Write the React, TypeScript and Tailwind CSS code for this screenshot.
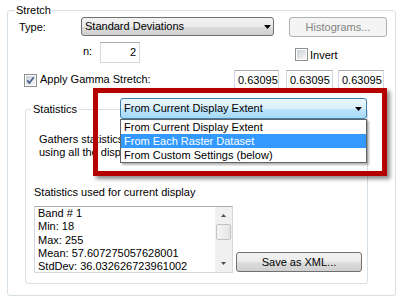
import clsx from "clsx";

function Arrow({ className }: { className?: string }) {
  return (
    <svg width="7" height="4" viewBox="0 0 7 4" className={className}>
      <polygon points="0,0 7,0 3.5,4" fill="#000" />
    </svg>
  );
}

function Check({ checked, className }: { checked?: boolean; className?: string }) {
  return (
    <svg width="13" height="13" viewBox="0 0 13 13" className={clsx("shrink-0", className)}>
      <defs>
        <linearGradient id={checked ? "cbOn" : "cbOff"} x1="0" y1="0" x2="1" y2="1">
          <stop offset="0" stopColor="#cbcfd5" />
          <stop offset="1" stopColor="#f7f7f7" />
        </linearGradient>
      </defs>
      <rect x="0.5" y="0.5" width="12" height="12" fill="#fff" stroke="#8f8f8f" />
      <rect x="2" y="2" width="9" height="9" fill={`url(#${checked ? "cbOn" : "cbOff"})`} />
      {checked && (
        <path d="M3.2 6.4 L5.4 9 L9.8 3.2" fill="none" stroke="#4a5c93" strokeWidth="1.7" />
      )}
    </svg>
  );
}

function Combo({
  text,
  hot,
  className,
}: {
  text: string;
  hot?: boolean;
  className?: string;
}) {
  return (
    <div
      className={clsx(
        "flex items-center justify-between rounded-[3px] border pl-[3px]",
        hot
          ? "border-[#3c7fb1] bg-[linear-gradient(#eaf6fd,#d9f0fc_50%,#bee6fd_50%,#a7d9f5)]"
          : "border-[#707070] bg-[linear-gradient(#f2f2f2,#ebebeb_50%,#dddddd_50%,#cfcfcf)]",
        className
      )}
    >
      <span className="whitespace-nowrap">{text}</span>
      <Arrow />
    </div>
  );
}

function TextBox({ value, className }: { value: string; className?: string }) {
  return (
    <div
      className={clsx(
        "h-[20px] overflow-hidden whitespace-nowrap border border-[#d5d8dd] border-t-[#abadb3] bg-white leading-[18px]",
        className
      )}
    >
      {value}
    </div>
  );
}

function ScrollBar() {
  return (
    <div className="flex w-[17px] shrink-0 flex-col items-center bg-[#f0f0f0]">
      <div className="flex h-[17px] w-full items-center justify-center">
        <svg width="5" height="3" viewBox="0 0 5 3">
          <polygon points="2.5,0 5,3 0,3" fill="#4d4d4d" />
        </svg>
      </div>
      <div className="h-[16px] w-[15px] rounded-[2px] border border-[#c2c2c2] bg-[linear-gradient(90deg,#f4f4f4,#e6e6e6)]" />
      <div className="flex-1" />
      <div className="flex h-[17px] w-full items-center justify-center">
        <svg width="5" height="3" viewBox="0 0 5 3">
          <polygon points="0,0 5,0 2.5,3" fill="#4d4d4d" />
        </svg>
      </div>
    </div>
  );
}

export default function App() {
  return (
    <div className="relative h-[307px] w-[400px] overflow-hidden bg-white font-['Liberation_Sans',Arial,sans-serif] text-[11px] leading-[13px] text-black">
      <fieldset className="ml-[7px] mt-[3px] h-[293px] w-[389px] rounded-[3px] border border-[#d5dfe5]">
        <legend className="ml-[7px] px-[1px] leading-[14px]">Stretch</legend>

        {/* Type */}
        <div className="flex h-[20px] items-start">
          <span className="ml-[11px] mt-[4px] w-[62px]">Type:</span>
          <Combo text="Standard Deviations" className="h-[19px] w-[193px] pr-[2px]" />
          <button
            disabled
            className="ml-[15px] h-[20px] w-[98px] rounded-[3px] border border-[#adb2b5] bg-[#f4f4f4] text-[#838383]"
          >
            Histograms...
          </button>
        </div>

        {/* n / Invert */}
        <div className="mt-[5px] flex h-[21px] items-start">
          <span className="ml-[75px] mt-[3px] w-[17px]">n:</span>
          <TextBox value="2" className="h-[21px] w-[40px] pr-[3px] text-right leading-[19px]" />
          <Check className="ml-[155px] mt-[6px]" />
          <span className="ml-[2px] mt-[7px]">Invert</span>
        </div>

        {/* Gamma */}
        <div className="mt-[7px] flex h-[20px] items-start">
          <Check checked className="ml-[16px] mt-[4px]" />
          <span className="ml-[3px] mt-[3px] w-[194px]">Apply Gamma Stretch:</span>
          <TextBox value="0.63095" className="w-[45px] pl-[3px]" />
          <TextBox value="0.63095" className="ml-[7px] w-[47px] pl-[3px]" />
          <TextBox value="0.63095" className="ml-[5px] w-[46px] pl-[3px]" />
        </div>

        {/* Statistics */}
        <fieldset className="ml-[17px] mt-[12px] h-[182px] w-[342px] rounded-[3px] border border-[#d5dfe5]">
          <legend className="ml-[5px] px-[2px] leading-[14px]">Statistics</legend>

          <div className="relative z-10 -mt-[18px] ml-[94px] h-[21px] w-[247px]">
            <Combo hot text="From Current Display Extent" className="h-[21px] w-full pr-[4px]" />
            <div className="absolute left-0 top-[21px] w-[247px] border border-[#646464] bg-white shadow-[2px_2px_2px_rgba(0,0,0,0.3)]">
              <div className="h-[14px] pl-[3px] leading-[14px]">From Current Display Extent</div>
              <div className="h-[14px] bg-[#3399ff] pl-[3px] leading-[14px] text-white">
                From Each Raster Dataset
              </div>
              <div className="h-[14px] pl-[3px] leading-[14px]">From Custom Settings (below)</div>
            </div>
          </div>

          {/* description, the part under the open list is cut off */}
          <div className="ml-[13px] mt-[14px] w-[81px] overflow-hidden whitespace-nowrap">
            <div>Gathers statistics from the current display extent</div>
            <div>using all the displayed pixels.</div>
          </div>

          <div className="ml-[8px] mt-[27px]">Statistics used for current display</div>

          <div className="ml-[8px] mt-[7px] flex items-end">
            <div className="flex h-[67px] w-[199px] overflow-hidden border border-[#d5d8dd] border-t-[#abadb3] bg-white">
              <div className="flex-1 whitespace-nowrap pl-[3px] leading-[13.3px]">
                <div>Band # 1</div>
                <div>Min: 18</div>
                <div>Max: 255</div>
                <div>Mean: 57.607275057628001</div>
                <div>StdDev: 36.032626723961002</div>
              </div>
              <ScrollBar />
            </div>
            <button className="mb-[1px] ml-[3px] h-[20px] w-[126px] rounded-[3px] border border-[#707070] bg-[linear-gradient(#f2f2f2,#ebebeb_50%,#dddddd_50%,#cfcfcf)]">
              Save as XML...
            </button>
          </div>
        </fieldset>
      </fieldset>

      {/* red highlight frame */}
      <div className="pointer-events-none absolute left-[93px] top-[88px] z-20 h-[88px] w-[294px] border-[5px] border-[#b50000] shadow-[3px_3px_4px_rgba(0,0,0,0.45)]" />
    </div>
  );
}
